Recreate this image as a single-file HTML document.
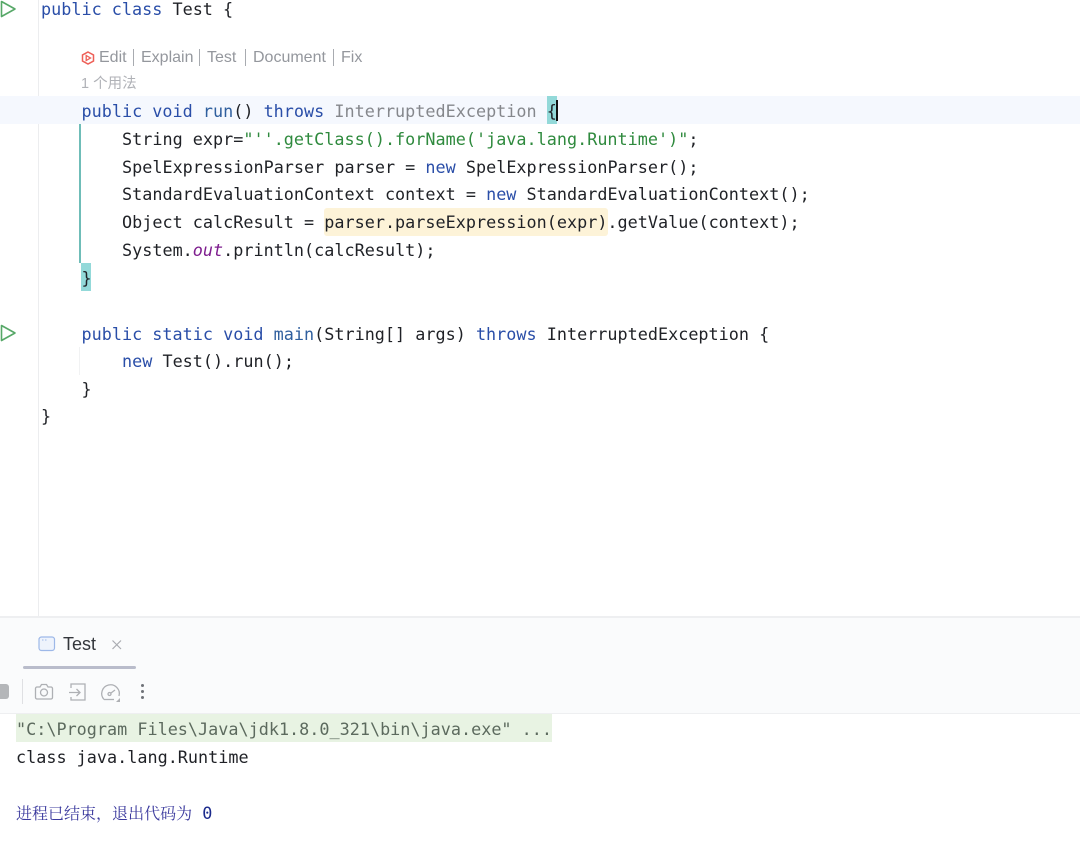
<!DOCTYPE html>
<html lang="zh"><head><meta charset="utf-8"><title>Test</title>
<style>
html,body{margin:0;padding:0;background:#fff}
#p{position:relative;width:1080px;height:867px;overflow:hidden;background:#fff;filter:blur(.35px)}
.c,.a{position:absolute;white-space:pre}
.c{font:16.8px/28px "DejaVu Sans Mono","Noto Sans CJK SC",monospace;letter-spacing:.01px;color:#1f2126;height:28px}
.b{position:absolute}
.k{color:#2a4ea8}.f{color:#2f5f9e}.s{color:#2f8a3e}.g{color:#85878c}.o{color:#7f1f8f;font-style:italic}
.u{font-family:"Liberation Sans","Noto Sans CJK SC",sans-serif;color:#9a9da3}
.h{font-size:16px;line-height:20px;color:#94979d;top:48px}
.pp{position:absolute;top:49px;width:1px;height:17px;background:#a8abb0}
</style></head><body><div id="p">
<div class="b" style="left:38px;top:0;width:1px;height:616px;background:#ecedef"></div>
<div class="b" style="left:0;top:96px;width:1080px;height:28px;background:#f5f8fe"></div>
<div class="b" style="left:79px;top:124px;width:1.5px;height:139px;background:#6fbdb8"></div>
<div class="b" style="left:79px;top:347px;width:1px;height:28px;background:#f1f2f3"></div>
<div class="b" style="left:547px;top:96px;width:10px;height:28px;background:#93d9d9"></div>
<div class="b" style="left:556px;top:100px;width:2px;height:21px;background:#111"></div>
<div class="b" style="left:81px;top:263px;width:10px;height:28px;background:#93d9d9"></div>
<div class="b" style="left:324px;top:208px;width:284px;height:28px;background:#fdf3d8;border-radius:3px"></div>

<svg class="b" style="left:0;top:0" width="20" height="20" viewBox="0 0 20 20"><path d="M1.500 1.500 15 9 1.500 16.500Z" fill="none" stroke="#57a868" stroke-width="1.600" stroke-linejoin="round"/></svg>
<svg class="b" style="left:0;top:324px" width="20" height="20" viewBox="0 0 20 20"><path d="M1.500 1.500 15 9 1.500 16.500Z" fill="none" stroke="#57a868" stroke-width="1.600" stroke-linejoin="round"/></svg>

<div class="c" style="left:41px;top:-5px"><span class="k">public class</span> Test {</div>

<svg class="b" style="left:81px;top:51px" width="14" height="14" viewBox="0 0 14 14"><path d="M7 1 12.500 4v6L7 13 1.500 10V4Z" fill="none" stroke="#ee5f57" stroke-width="1.500"/><path d="M5.200 4.500 9.500 7 5.200 9.500Z" fill="none" stroke="#ee5f57" stroke-width="1.300"/></svg>
<div class="a u h" style="left:99px">Edit</div><div class="pp" style="left:133px"></div>
<div class="a u h" style="left:141px">Explain</div><div class="pp" style="left:199px"></div>
<div class="a u h" style="left:207px">Test</div><div class="pp" style="left:245px"></div>
<div class="a u h" style="left:253px">Document</div><div class="pp" style="left:333px"></div>
<div class="a u h" style="left:341px">Fix</div>
<div class="a u" style="left:81px;top:74px;font-size:14.500px;line-height:20px;color:#b0b2b7">1 个用法</div>

<div class="c" style="left:81.500px;top:97px"><span class="k">public void</span> <span class="f">run</span>() <span class="k">throws</span> <span class="g">InterruptedException</span> {</div>
<div class="c" style="left:122px;top:125px">String expr=<span class="s">"''.getClass().forName('java.lang.Runtime')"</span>;</div>
<div class="c" style="left:122px;top:153px">SpelExpressionParser parser = <span class="k">new</span> SpelExpressionParser();</div>
<div class="c" style="left:122px;top:180px">StandardEvaluationContext context = <span class="k">new</span> StandardEvaluationContext();</div>
<div class="c" style="left:122px;top:208px">Object calcResult = parser.parseExpression(expr).getValue(context);</div>
<div class="c" style="left:122px;top:236px">System.<span class="o">out</span>.println(calcResult);</div>
<div class="c" style="left:81.500px;top:264px">}</div>
<div class="c" style="left:81.500px;top:320px"><span class="k">public static void</span> <span class="f">main</span>(String[] args) <span class="k">throws</span> InterruptedException {</div>
<div class="c" style="left:122px;top:347px"><span class="k">new</span> Test().run();</div>
<div class="c" style="left:81.500px;top:375px">}</div>
<div class="c" style="left:41px;top:402px">}</div>

<div class="b" style="left:0;top:616px;width:1080px;height:2px;background:#eeeff1"></div>
<div class="b" style="left:0;top:618px;width:1080px;height:96px;background:#fafbfc"></div>
<div class="b" style="left:0;top:713px;width:1080px;height:1px;background:#eeeff1"></div>
<svg class="b" style="left:38px;top:635px" width="18" height="18" viewBox="0 0 18 18"><rect x="1" y="2" width="15.500" height="13.500" rx="2.500" fill="#eef3fc" stroke="#9db8e8" stroke-width="1.200"/><path d="M4 5h1.500M7 5h1.500" stroke="#9db8e8"/></svg>
<div class="a" style="left:63px;top:634px;font:18px/20px 'Liberation Sans',sans-serif;color:#33363b">Test</div>
<svg class="b" style="left:111px;top:639px" width="12" height="12" viewBox="0 0 12 12"><path d="M1.500 1.500 10 10M10 1.500 1.500 10" stroke="#a9acb1" stroke-width="1.200"/></svg>
<div class="b" style="left:23px;top:666px;width:113px;height:3px;background:#b9bccb;border-radius:2px"></div>

<div class="b" style="left:0;top:684px;width:9px;height:15px;background:#b4b6b9;border-radius:0 3px 3px 0"></div>
<div class="b" style="left:22px;top:679px;width:1px;height:25px;background:#dfe0e3"></div>
<svg class="b" style="left:33px;top:681px" width="22" height="22" viewBox="0 0 22 22" fill="none" stroke="#aeb0b4" stroke-width="1.300"><path d="M2.500 7.500a1.500 1.500 0 0 1 1.500-1.500h3l1.500-2.500h5l1.500 2.500h3a1.500 1.500 0 0 1 1.500 1.500v9a1.500 1.500 0 0 1-1.500 1.500H4a1.500 1.500 0 0 1-1.500-1.500Z"/><circle cx="11" cy="11.500" r="3.500"/></svg>
<svg class="b" style="left:68px;top:681px" width="22" height="22" viewBox="0 0 22 22" fill="none" stroke="#aeb0b4" stroke-width="1.300"><path d="M3 7V3h14v16H3v-3"/><path d="M1 11.500h11M8.500 8l3.500 3.500L8.500 15"/></svg>
<svg class="b" style="left:99px;top:681px" width="24" height="22" viewBox="0 0 24 22" fill="none" stroke="#aeb0b4" stroke-width="1.300"><path d="M5 18.500a8.800 8.800 0 1 1 15-3.500"/><path d="M5 18.500h10"/><circle cx="10.500" cy="13" r="1.500"/><path d="M12 12l4-3"/><path d="M21 17v4h-4Z" fill="#aeb0b4" stroke="none"/></svg>
<div class="b" style="left:141px;top:684px;width:3px;height:3px;border-radius:50%;background:#6f7278"></div>
<div class="b" style="left:141px;top:690px;width:3px;height:3px;border-radius:50%;background:#6f7278"></div>
<div class="b" style="left:141px;top:696px;width:3px;height:3px;border-radius:50%;background:#6f7278"></div>

<div class="b" style="left:16px;top:714px;width:536px;height:28px;background:#e8f3e3"></div>
<div class="c" style="left:16px;top:715px;color:#5c6a5e">"C:\Program Files\Java\jdk1.8.0_321\bin\java.exe" ...</div>
<div class="c" style="left:16px;top:743px">class java.lang.Runtime</div>
<div class="c" style="left:16px;top:799px;color:#3b3a9e"><span style="font:16px/28px 'Noto Serif CJK SC','Noto Sans CJK SC',serif">进程已结束，退出代码为</span> <span style="color:#1b2a8c">0</span></div>
</div></body></html>
